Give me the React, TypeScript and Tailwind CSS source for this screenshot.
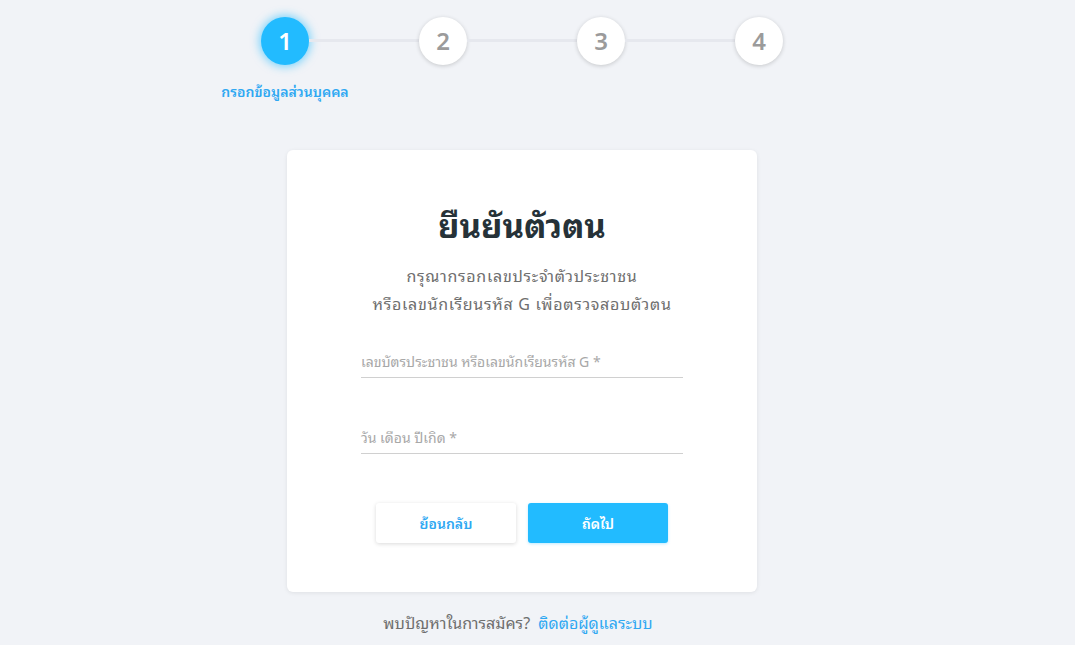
import React from "react"

const steps = [1, 2, 3, 4]

const Step = ({ n, active, label }: { n: number; active?: boolean; label?: string }) => (
  <div className="flex flex-col items-center w-12">
    <div
      className={`w-12 h-12 rounded-full flex items-center justify-center text-[24px] font-semibold ${
        active
          ? "bg-[#22bbff] text-white shadow-[0_0_8px_2px_rgba(34,187,255,0.55)]"
          : "bg-white text-[#9b9b9b] shadow-[0_1px_4px_rgba(0,0,0,0.18)]"
      }`}
    >
      {n}
    </div>
    {label ? (
      <p className="mt-[17px] whitespace-nowrap text-[14px] font-semibold text-[#2fa8f2] leading-5">
        {label}
      </p>
    ) : (
      <div className="mt-[17px] h-5" />
    )}
  </div>
)

const Field = ({ label }: { label: string }) => (
  <div className="w-[322px] border-b border-[#d0d0d0] pb-[4px]">
    <span className="text-[14px] text-[#a8a8a8] leading-5">{label}</span>
  </div>
)

export default function App() {
  return (
    <div className="min-h-[645px] w-full bg-[#f1f3f7] flex flex-col items-center pr-[31px] font-['Noto_Sans','Noto_Sans_Thai_Looped','Loma',sans-serif]">
      <div className="flex items-start pt-[17px]">
        {steps.map((n, i) => (
          <React.Fragment key={n}>
            <Step n={n} active={n === 1} label={n === 1 ? "กรอกข้อมูลส่วนบุคคล" : undefined} />
            {i < steps.length - 1 && <div className="w-[110px] h-[3px] bg-[#e6e8ee] mt-[22px]" />}
          </React.Fragment>
        ))}
      </div>

      <div className="mt-[48px] w-[470px] bg-white rounded-md shadow-[0_1px_4px_rgba(0,0,0,0.08)] flex flex-col items-center pt-[52px] pb-[49px]">
        <h1 className="text-[33px] font-bold text-[#263238] leading-[48px]">ยืนยันตัวตน</h1>
        <p className="mt-[12px] text-center text-[16px] tracking-[0.7px] text-[#6e6e6e] leading-[28px]">
          กรุณากรอกเลขประจำตัวประชาชน
          <br />
          หรือเลขนักเรียนรหัส G เพื่อตรวจสอบตัวตน
        </p>
        <div className="mt-[31px] flex flex-col gap-[47px]">
          <Field label="เลขบัตรประชาชน หรือเลขนักเรียนรหัส G *" />
          <Field label="วัน เดือน ปีเกิด *" />
        </div>
        <div className="mt-[49px] flex gap-3">
          <button className="w-[140px] h-10 bg-white rounded-[3px] shadow-[0_1px_4px_rgba(0,0,0,0.15)] text-[14px] font-semibold text-[#2fa8f2]">
            ย้อนกลับ
          </button>
          <button className="w-[140px] h-10 bg-[#22bbff] rounded-[3px] shadow-[0_1px_3px_rgba(34,187,255,0.3)] text-[14px] font-semibold text-white">
            ถัดไป
          </button>
        </div>
      </div>

      <p className="mt-[19px] mr-2 text-[16px] text-[#6e6e6e] leading-6">
        พบปัญหาในการสมัคร? <span className="ml-1 text-[#2fa8f2]">ติดต่อผู้ดูแลระบบ</span>
      </p>
    </div>
  )
}
